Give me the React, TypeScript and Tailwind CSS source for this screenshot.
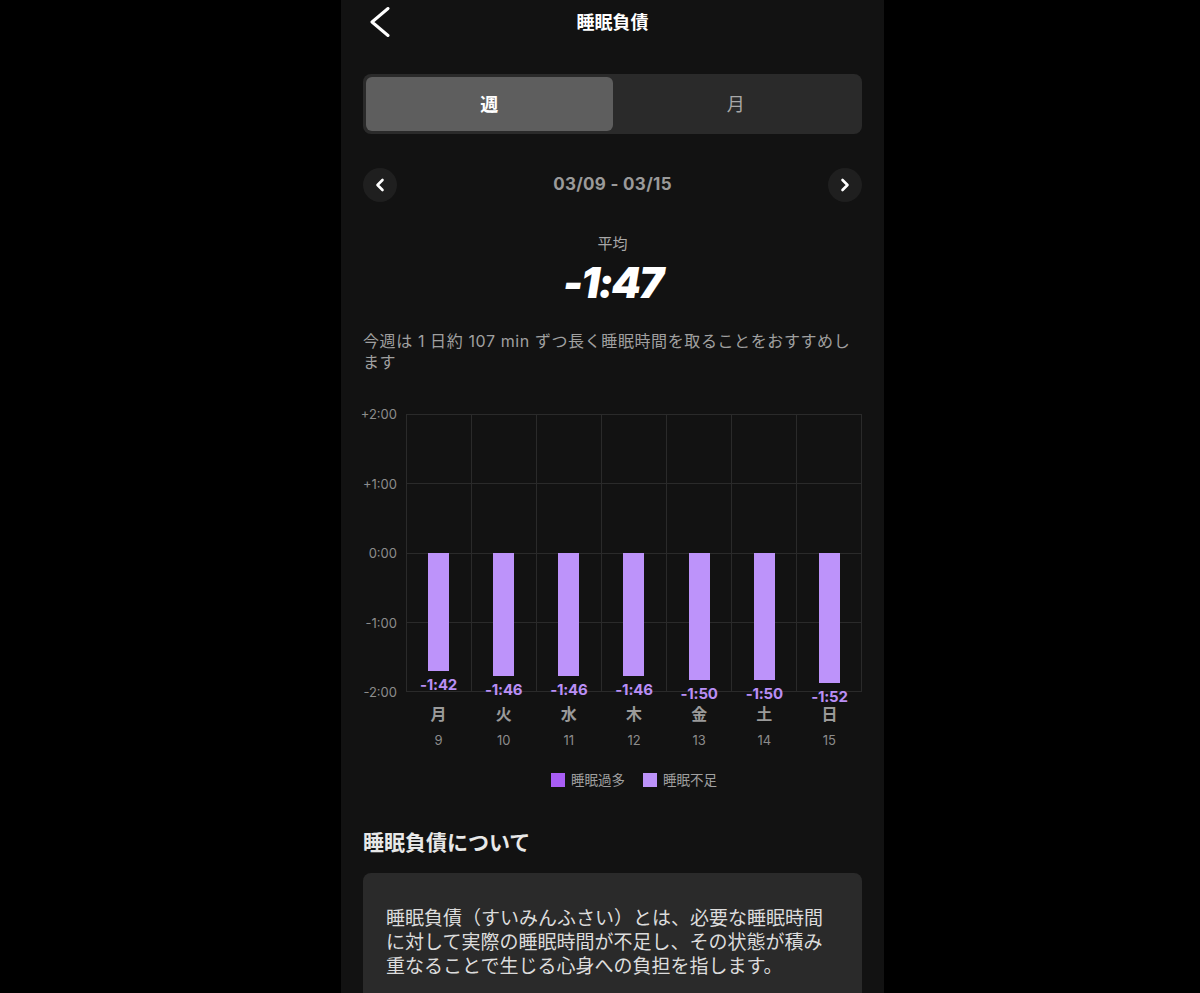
import React from "react";

const days = [
  { d: "月", n: 9, v: 102, t: "-1:42" },
  { d: "火", n: 10, v: 106, t: "-1:46" },
  { d: "水", n: 11, v: 106, t: "-1:46" },
  { d: "木", n: 12, v: 106, t: "-1:46" },
  { d: "金", n: 13, v: 110, t: "-1:50" },
  { d: "土", n: 14, v: 110, t: "-1:50" },
  { d: "日", n: 15, v: 112, t: "-1:52" },
];

const yLabels = ["+2:00", "+1:00", "0:00", "-1:00", "-2:00"];
const PLOT_H = 278;
const PER_MIN = PLOT_H / 240;

const font = { fontFamily: '"Inter", "Noto Sans CJK JP", sans-serif' };

export default function App() {
  return (
    <div className="min-h-[993px] w-full bg-black" style={font}>
      <div className="ml-[341px] w-[543px] min-h-[993px] bg-[#121212] overflow-hidden">
        {/* header */}
        <div className="relative h-[44px] flex items-center justify-center">
          <svg className="absolute left-[28px] top-[7px]" width="22" height="30" viewBox="0 0 22 30" fill="none">
            <polyline points="19,1.5 3,15 19,28.5" stroke="white" strokeWidth="3" strokeLinecap="round" strokeLinejoin="round" />
          </svg>
          <div className="text-[18px] font-bold text-white">睡眠負債</div>
        </div>

        <div className="px-[22px]">
          {/* segmented */}
          <div className="mt-[30px] h-[60px] rounded-[8px] bg-[#2a2a2a] p-[3px] flex">
            <div className="flex-1 rounded-[6px] bg-[#5e5e5e] flex items-center justify-center text-[18px] font-bold text-white">週</div>
            <div className="flex-1 flex items-center justify-center text-[18px] text-[#a8a8a8]">月</div>
          </div>

          {/* date nav */}
          <div className="mt-[34px] flex items-center justify-between">
            <div className="w-[34px] h-[34px] rounded-full bg-[#1f1f1f] flex items-center justify-center">
              <svg width="10" height="14" viewBox="0 0 10 14" fill="none">
                <polyline points="7.5,2 2.5,7 7.5,12" stroke="white" strokeWidth="2.6" strokeLinecap="round" strokeLinejoin="round" />
              </svg>
            </div>
            <div className="text-[17px] font-bold text-[#9a9a9a] tracking-[0.3px]">03/09 - 03/15</div>
            <div className="w-[34px] h-[34px] rounded-full bg-[#1f1f1f] flex items-center justify-center">
              <svg width="10" height="14" viewBox="0 0 10 14" fill="none">
                <polyline points="2.5,2 7.5,7 2.5,12" stroke="white" strokeWidth="2.6" strokeLinecap="round" strokeLinejoin="round" />
              </svg>
            </div>
          </div>

          {/* average */}
          <div className="mt-[32px] text-center text-[15px] leading-[20px] text-[#a8a8a8]">平均</div>
          <div className="mt-[7px] text-center text-[42px] leading-[44px] font-black italic text-white tracking-[-2px]">-1:47</div>

          <div className="mt-[26px] text-[16px] leading-[21px] tracking-[0.6px] text-[#a0a0a0]">
            今週は 1 日約 107 min ずつ長く睡眠時間を取ることをおすすめします
          </div>

          {/* chart */}
          <div className="mt-[41px] flex">
            <div className="relative w-[43px] h-[278px]">
              {yLabels.map((l, i) => (
                <div
                  key={l}
                  className="absolute right-[9px] -translate-y-1/2 text-[13px] leading-[16px] text-[#8c8c8c]"
                  style={{ top: i * (PLOT_H / 4) }}
                >
                  {l}
                </div>
              ))}
            </div>
            <div className="flex-1">
              <div className="relative h-[278px]">
                <div className="absolute inset-0 grid grid-rows-4 border-b border-[#2a2a2a]">
                  {[0, 1, 2, 3].map((r) => (
                    <div key={r} className="border-t border-[#2a2a2a]" />
                  ))}
                </div>
                <div className="absolute inset-0 grid grid-cols-7 border-r border-[#2a2a2a]">
                  {days.map((d) => (
                    <div key={d.d} className="border-l border-[#2a2a2a]" />
                  ))}
                </div>
                <div className="absolute inset-0 grid grid-cols-7">
                  {days.map((d) => (
                    <div key={d.d} className="relative flex flex-col items-center pt-[139px]">
                      <div className="w-[21px] bg-[#bd93fa]" style={{ height: d.v * PER_MIN }} />
                      <div className="mt-[5px] text-[15px] leading-[18px] font-bold text-[#b98ef5] tracking-[-0.2px]">{d.t}</div>
                    </div>
                  ))}
                </div>
              </div>
              <div className="mt-[11px] grid grid-cols-7">
                {days.map((d) => (
                  <div key={d.d} className="flex flex-col items-center">
                    <div className="text-[16px] leading-[22px] font-bold text-[#9a9a9a]">{d.d}</div>
                    <div className="mt-[6px] text-[13px] leading-[18px] text-[#8c8c8c]">{d.n}</div>
                  </div>
                ))}
              </div>

              {/* legend */}
              <div className="mt-[22px] flex items-center justify-center gap-[18px] text-[13.5px] leading-[18px] text-[#a0a0a0]">
                <div className="flex items-center gap-[6px]">
                  <div className="w-[14px] h-[14px] bg-[#a85df5]" />
                  <span>睡眠過多</span>
                </div>
                <div className="flex items-center gap-[6px]">
                  <div className="w-[14px] h-[14px] bg-[#bd93fa]" />
                  <span>睡眠不足</span>
                </div>
              </div>
            </div>
          </div>

          {/* about */}
          <div className="mt-[40px] text-[21px] leading-[28px] font-bold text-[#e8e8e8]">睡眠負債について</div>
          <div className="mt-[16px] rounded-[8px] bg-[#2a2a2a] px-[23px] pt-[34px] pb-[30px] text-[19px] leading-[24px] text-[#dcdcdc]">
            睡眠負債（すいみんふさい）とは、必要な睡眠時間に対して実際の睡眠時間が不足し、その状態が積み重なることで生じる心身への負担を指します。
          </div>
        </div>
      </div>
    </div>
  );
}
